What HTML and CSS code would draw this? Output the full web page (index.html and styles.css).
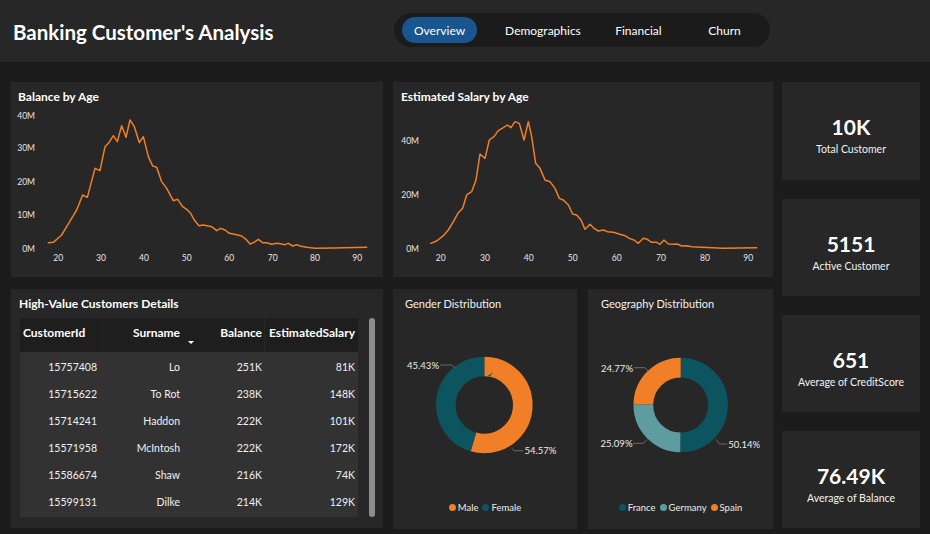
FILE: index.html
```html
<!DOCTYPE html>
<html lang="en">
<head>
<meta charset="utf-8">
<title>Banking Customer's Analysis</title>
<link rel="stylesheet" href="styles.css">
</head>
<body>
<header class="topbar">
  <h1 class="title">Banking Customer's Analysis</h1>
  <nav class="tabs">
    <span class="tab active">Overview</span>
    <span class="tab tab-demo">Demographics</span>
    <span class="tab tab-fin">Financial</span>
    <span class="tab tab-churn">Churn</span>
  </nav>
</header>
<main class="dash">
  <div class="left">
    <div class="row-top">
      <section class="card chart-card balance">
        <h2 class="card-title">Balance by Age</h2>
        <svg class="chart" width="372" height="173" viewBox="11 104 372 173">
          <g class="ax">
            <text x="35" y="118.5" text-anchor="end">40M</text>
            <text x="35" y="151" text-anchor="end">30M</text>
            <text x="35" y="184.5" text-anchor="end">20M</text>
            <text x="35" y="218" text-anchor="end">10M</text>
            <text x="35" y="251.5" text-anchor="end">0M</text>
            <text x="58.3" y="260.5" text-anchor="middle">20</text>
            <text x="101" y="260.5" text-anchor="middle">30</text>
            <text x="144" y="260.5" text-anchor="middle">40</text>
            <text x="186.7" y="260.5" text-anchor="middle">50</text>
            <text x="229.3" y="260.5" text-anchor="middle">60</text>
            <text x="272.7" y="260.5" text-anchor="middle">70</text>
            <text x="315" y="260.5" text-anchor="middle">80</text>
            <text x="357.3" y="260.5" text-anchor="middle">90</text>
          </g>
          <g transform="translate(0 80) scale(0.33333)">
            <polyline class="line" vector-effect="non-scaling-stroke" points="145,488 160,487 185,465 200,440 215,415 230,390 248,345 262,352 285,265 300,272 315,200 325,190 340,167 352,185 365,137 378,172 390,120 403,140 418,188 430,170 445,230 458,258 470,262 485,305 500,325 520,362 533,358 548,380 560,388 572,400 583,420 597,437 610,435 635,440 650,452 662,445 675,450 688,460 700,462 725,468 738,478 750,492 762,487 775,478 788,488 800,488 815,493 830,490 845,492 855,494 865,490 878,498 890,494 900,498 920,502 945,505 1000,504 1100,502"/>
          </g>
        </svg>
      </section>
      <section class="card chart-card salary">
        <h2 class="card-title">Estimated Salary by Age</h2>
        <svg class="chart" width="380" height="173" viewBox="393 104 380 173">
          <g class="ax">
            <text x="419" y="143.7" text-anchor="end">40M</text>
            <text x="419" y="198" text-anchor="end">20M</text>
            <text x="419" y="252" text-anchor="end">0M</text>
            <text x="440.7" y="260.5" text-anchor="middle">20</text>
            <text x="485" y="260.5" text-anchor="middle">30</text>
            <text x="528.7" y="260.5" text-anchor="middle">40</text>
            <text x="572.7" y="260.5" text-anchor="middle">50</text>
            <text x="616.7" y="260.5" text-anchor="middle">60</text>
            <text x="661" y="260.5" text-anchor="middle">70</text>
            <text x="705" y="260.5" text-anchor="middle">80</text>
            <text x="748.3" y="260.5" text-anchor="middle">90</text>
          </g>
          <g transform="translate(390 80) scale(0.33333)">
            <polyline class="line" vector-effect="non-scaling-stroke" points="122,490 140,483 160,467 175,450 190,425 205,398 218,385 230,345 245,335 258,300 270,222 285,235 298,180 312,170 325,152 340,143 352,135 363,143 375,125 388,130 402,180 415,125 425,170 437,250 450,265 465,300 480,305 495,325 508,355 520,360 535,375 548,402 560,405 573,420 585,448 600,433 612,445 625,453 640,450 652,455 670,457 690,463 705,467 718,475 732,480 745,490 760,475 772,478 785,487 800,487 810,493 822,480 835,492 850,493 862,492 875,498 890,497 905,500 935,502 1000,505 1100,503"/>
          </g>
        </svg>
      </section>
    </div>
    <div class="row-bottom">
      <section class="card table-card">
        <h2 class="card-title">High-Value Customers Details</h2>
        <div class="table-wrap">
          <div class="table">
            <div class="trow thead">
              <div class="cell c1">CustomerId</div>
              <div class="cell c2">Surname<span class="sort"></span></div>
              <div class="cell c3">Balance</div>
              <div class="cell c4">EstimatedSalary</div>
            </div>
            <div class="tbody">
              <div class="trow"><div class="cell c1">15757408</div><div class="cell c2">Lo</div><div class="cell c3">251K</div><div class="cell c4">81K</div></div>
              <div class="trow"><div class="cell c1">15715622</div><div class="cell c2">To Rot</div><div class="cell c3">238K</div><div class="cell c4">148K</div></div>
              <div class="trow"><div class="cell c1">15714241</div><div class="cell c2">Haddon</div><div class="cell c3">222K</div><div class="cell c4">101K</div></div>
              <div class="trow"><div class="cell c1">15571958</div><div class="cell c2">McIntosh</div><div class="cell c3">222K</div><div class="cell c4">172K</div></div>
              <div class="trow"><div class="cell c1">15586674</div><div class="cell c2">Shaw</div><div class="cell c3">216K</div><div class="cell c4">74K</div></div>
              <div class="trow"><div class="cell c1">15599131</div><div class="cell c2">Dilke</div><div class="cell c3">214K</div><div class="cell c4">129K</div></div>
            </div>
          </div>
          <div class="scrollbar"></div>
        </div>
      </section>
      <section class="card donut-card gender">
        <h2 class="card-title light">Gender Distribution</h2>
        <svg class="donut" width="184" height="178" viewBox="393 316 184 178">
          <g transform="rotate(-90 484.3 405)">
            <circle cx="484.3" cy="405" r="38.5" class="seg" stroke="#f07f27" pathLength="100" stroke-dasharray="54.57 45.43"/>
            <circle cx="484.3" cy="405" r="38.5" class="seg" stroke="#0d5461" pathLength="100" stroke-dasharray="45.43 54.57" stroke-dashoffset="-54.57"/>
          </g>
          <polyline class="leader" points="440,365 451.7,365 455,368"/>
          <polyline class="leader" points="511.7,448.3 514.3,450.7 523,450.7"/>
          <text class="dl" x="439" y="368.5" text-anchor="end">45.43%</text>
          <text class="dl" x="524.5" y="454" text-anchor="start">54.57%</text>
        </svg>
        <div class="legend">
          <span class="li"><i class="dot orange"></i>Male</span>
          <span class="li"><i class="dot teal"></i>Female</span>
        </div>
      </section>
      <section class="card donut-card geo">
        <h2 class="card-title light">Geography Distribution</h2>
        <svg class="donut" width="185" height="178" viewBox="588 316 185 178">
          <g transform="rotate(-90 680.7 405)">
            <circle cx="680.7" cy="405" r="37.4" class="seg seg-geo" stroke="#0d5461" pathLength="100" stroke-dasharray="50.14 49.86"/>
            <circle cx="680.7" cy="405" r="37.4" class="seg seg-geo" stroke="#5e9ca0" pathLength="100" stroke-dasharray="25.09 74.91" stroke-dashoffset="-50.14"/>
            <circle cx="680.7" cy="405" r="37.4" class="seg seg-geo" stroke="#f07f27" pathLength="100" stroke-dasharray="24.77 75.23" stroke-dashoffset="-75.23"/>
          </g>
          <polyline class="leader" points="633.5,367.7 645,367.7 648,371.5"/>
          <polyline class="leader" points="633,443.3 643.3,443.3 647,439.5"/>
          <polyline class="leader" points="716,439.3 719.5,444 727.3,444"/>
          <text class="dl" x="633" y="371.5" text-anchor="end">24.77%</text>
          <text class="dl" x="632.5" y="446.5" text-anchor="end">25.09%</text>
          <text class="dl" x="728.3" y="447.5" text-anchor="start">50.14%</text>
        </svg>
        <div class="legend">
          <span class="li"><i class="dot teal"></i>France</span>
          <span class="li"><i class="dot lteal"></i>Germany</span>
          <span class="li"><i class="dot orange"></i>Spain</span>
        </div>
      </section>
    </div>
  </div>
  <aside class="kpis">
    <div class="card kpi k1"><div class="kv">10K</div><div class="kl">Total Customer</div></div>
    <div class="card kpi"><div class="kv">5151</div><div class="kl">Active Customer</div></div>
    <div class="card kpi"><div class="kv">651</div><div class="kl">Average of CreditScore</div></div>
    <div class="card kpi"><div class="kv">76.49K</div><div class="kl">Average of Balance</div></div>
  </aside>
</main>
</body>
</html>
```
FILE: styles.css
```css
* { box-sizing: border-box; }
html, body { margin: 0; padding: 0; }
body {
  width: 930px;
  height: 534px;
  overflow: hidden;
  background: #1c1c1c;
  color: #ffffff;
  font-family: Lato, "Open Sans", "DejaVu Sans", sans-serif;
}

/* header */
.topbar {
  height: 62px;
  background: #272727;
  display: flex;
  align-items: flex-start;
  padding-left: 13px;
}
.title {
  width: 381px;
  margin: 20px 0 0;
  font-size: 20.5px;
  line-height: 25px;
  font-weight: 700;
  white-space: nowrap;
}
.tabs {
  margin-top: 13px;
  width: 376px;
  height: 34px;
  background: #1b1b1b;
  border-radius: 17px;
  display: flex;
  align-items: center;
  padding: 0 8px;
}
.tab {
  width: 76px;
  height: 26px;
  border-radius: 13px;
  display: flex;
  align-items: center;
  justify-content: center;
  font-size: 12px;
  color: #ffffff;
  white-space: nowrap;
}
.tab.active { background: #19558f; }
.tab-demo { margin-left: 28px; }
.tab-fin { margin-left: 20px; }
.tab-churn { margin-left: 11px; }

/* layout */
.dash {
  display: flex;
  gap: 9px;
  padding: 20px 0 0 11px;
}
.left { width: 762px; }
.row-top {
  display: flex;
  gap: 10px;
  height: 195px;
}
.row-bottom {
  display: flex;
  gap: 10px;
  height: 240px;
  margin-top: 12px;
}
.card { background: #272727; }
.balance { width: 372px; }
.salary { width: 380px; }
.table-card { width: 372px; height: 239px; }
.gender { width: 184px; }
.geo { width: 185px; margin-left: 1px; }

.card-title {
  margin: 0;
  padding: 8px 7px 0;
  font-size: 12px;
  line-height: 14px;
  font-weight: 700;
  white-space: nowrap;
}
.salary .card-title { padding-left: 8px; }
.chart { display: block; }
.ax text {
  font-family: Lato, "Open Sans", sans-serif;
  font-size: 8.5px;
  fill: #e6e6e6;
}
.line {
  fill: none;
  stroke: #f07f27;
  stroke-width: 1.5;
  stroke-linejoin: round;
  stroke-linecap: round;
}

/* table */
.table-card .card-title { padding-left: 8px; margin-bottom: 7px; }
.table-wrap {
  display: flex;
  gap: 11px;
  padding-left: 9px;
}
.table { width: 338px; }
.trow {
  display: grid;
  grid-template-columns: 82px 84px 78px 94px;
  height: 27px;
  align-items: center;
  background: #323232;
  font-size: 10.5px;
  color: #f0f0f0;
}
.thead {
  height: 34px;
  background: #1e1e1e;
  font-size: 12px;
  font-weight: 700;
  color: #ffffff;
  align-items: start;
}
.tbody {
  height: 165px;
  padding-top: 1px;
  background: #323232;
}
.cell {
  text-align: right;
  white-space: nowrap;
  line-height: 14px;
}
.c1 { padding-right: 5px; }
.c2 { padding-right: 6px; position: relative; }
.c3 { padding-right: 2px; }
.c4 { padding-right: 3px; }
.thead .cell { height: 34px; padding-top: 8px; }
.thead .c1 { text-align: left; padding-left: 3px; }
.thead .c2 { border-left: 1px solid #252525; }
.thead .c4 { border-left: 1px solid #262626; }
.sort {
  position: absolute;
  right: -8px;
  top: 23px;
  width: 0;
  height: 0;
  border-left: 3.5px solid transparent;
  border-right: 3.5px solid transparent;
  border-top: 3.5px solid #ffffff;
}
.scrollbar {
  width: 6px;
  height: 199px;
  background: #8c8c8c;
  border-radius: 3px;
}

/* donuts */
.donut-card .card-title.light {
  font-size: 11px;
  font-weight: 400;
  padding: 8px 12px 0;
  margin-bottom: 5px;
  color: #f2f2f2;
}
.geo .card-title.light { padding-left: 13px; }
.donut { display: block; }
.seg { fill: none; stroke-width: 19.6; }
.seg-geo { stroke-width: 19.7; }
.leader {
  fill: none;
  stroke: #7c7c7c;
  stroke-width: 0.8;
}
.dl {
  font-family: Lato, "Open Sans", sans-serif;
  font-size: 9.5px;
  fill: #ececec;
}
.legend {
  height: 26px;
  display: flex;
  align-items: center;
  justify-content: center;
  gap: 4px;
  font-size: 9.5px;
  color: #ececec;
}
.li { display: inline-flex; align-items: center; white-space: nowrap; }
.dot {
  width: 7px;
  height: 7px;
  border-radius: 50%;
  margin-right: 2px;
  display: inline-block;
}
.dot.orange { background: #f07f27; }
.dot.teal { background: #0d5461; }
.dot.lteal { background: #5e9ca0; }

/* KPIs */
.kpis {
  width: 138px;
  display: flex;
  flex-direction: column;
  gap: 19px;
}
.kpi {
  height: 97px;
  padding-top: 33px;
  text-align: center;
}
.kpi.k1 { height: 98px; }
.kv {
  font-size: 21px;
  line-height: 24px;
  font-weight: 700;
}
.kl {
  margin-top: 4px;
  font-size: 10.5px;
  line-height: 13px;
  color: #f2f2f2;
}
```
